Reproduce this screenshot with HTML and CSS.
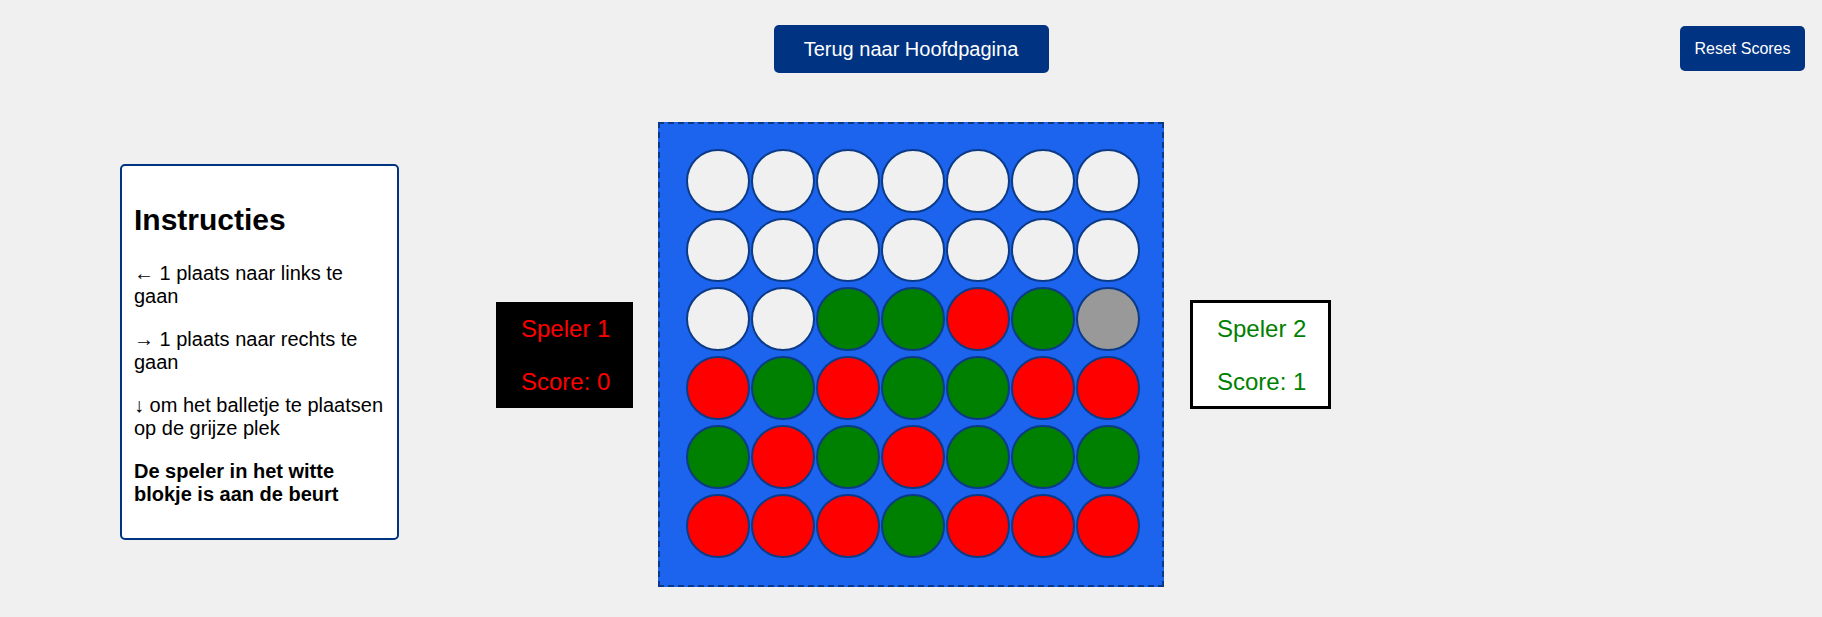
FILE: index.html
```html
<!DOCTYPE html>
<html lang="nl">
<head>
<meta charset="utf-8">
<title>Vier op een rij</title>
<link rel="stylesheet" href="styles.css">
</head>
<body>
  <header class="top-bar">
    <div class="top-spacer"></div>
    <button class="btn btn-home">Terug naar Hoofdpagina</button>
    <button class="btn btn-reset">Reset Scores</button>
  </header>

  <main class="game-row">
    <div class="left-side">
      <section class="instructions">
        <h2>Instructies</h2>
        <p>← 1 plaats naar links te gaan</p>
        <p>→ 1 plaats naar rechts te gaan</p>
        <p>↓ om het balletje te plaatsen op de grijze plek</p>
        <p class="bold">De speler in het witte blokje is aan de beurt</p>
      </section>
      <div class="player player-one">
        <p>Speler 1</p>
        <p>Score: 0</p>
      </div>
    </div>

    <div class="board">
      <div class="cell"></div><div class="cell"></div><div class="cell"></div><div class="cell"></div><div class="cell"></div><div class="cell"></div><div class="cell"></div>
      <div class="cell"></div><div class="cell"></div><div class="cell"></div><div class="cell"></div><div class="cell"></div><div class="cell"></div><div class="cell"></div>
      <div class="cell"></div><div class="cell"></div><div class="cell green"></div><div class="cell green"></div><div class="cell red"></div><div class="cell green"></div><div class="cell preview"></div>
      <div class="cell red"></div><div class="cell green"></div><div class="cell red"></div><div class="cell green"></div><div class="cell green"></div><div class="cell red"></div><div class="cell red"></div>
      <div class="cell green"></div><div class="cell red"></div><div class="cell green"></div><div class="cell red"></div><div class="cell green"></div><div class="cell green"></div><div class="cell green"></div>
      <div class="cell red"></div><div class="cell red"></div><div class="cell red"></div><div class="cell green"></div><div class="cell red"></div><div class="cell red"></div><div class="cell red"></div>
    </div>

    <div class="right-side">
      <div class="player player-two active">
        <p>Speler 2</p>
        <p>Score: 1</p>
      </div>
    </div>
  </main>
</body>
</html>
```

FILE: styles.css
```css
html, body {
  margin: 0;
  padding: 0;
}

body {
  background: #f0f0f0;
  font-family: "Liberation Sans", Arial, sans-serif;
  font-size: 20px;
  color: #000;
  width: 1822px;
}

.top-bar {
  display: grid;
  grid-template-columns: 1fr auto 1fr;
  align-items: start;
  padding-top: 25px;
}

.btn {
  background: #003382;
  color: #fff;
  border: none;
  border-radius: 5px;
  font-family: "Liberation Sans", Arial, sans-serif;
  cursor: pointer;
}

.btn-home {
  font-size: 20px;
  line-height: 23px;
  width: 275px;
  height: 48px;
  padding: 0;
}

.btn-reset {
  justify-self: end;
  margin-top: 1px;
  margin-right: 17px;
  font-size: 16px;
  line-height: 18px;
  width: 125px;
  height: 45px;
  padding: 0;
}

.game-row {
  display: grid;
  grid-template-columns: 1fr 506px 1fr;
  align-items: center;
  margin-top: 49px;
}

.left-side {
  display: flex;
  align-items: center;
  justify-content: space-between;
  padding-left: 120px;
  padding-right: 25px;
}

.right-side {
  display: flex;
  align-items: center;
  padding-left: 26px;
}

.instructions {
  width: 251px;
  padding: 12px;
  background: #fff;
  border: 2px solid #003382;
  border-radius: 5px;
  margin-top: -6px;
}

.instructions h2 {
  font-size: 30px;
  font-weight: bold;
  margin: 25px 0;
}

.instructions p {
  margin: 20px 0;
  line-height: 23px;
}

.instructions p.bold {
  font-weight: bold;
}

.player {
  width: 87px;
  padding: 13px 25px;
  font-size: 24px;
  text-align: center;
  white-space: nowrap;
}

.player p {
  margin: 0;
  line-height: 27px;
}

.player p + p {
  margin-top: 26px;
}

.player-one {
  background: #000;
  color: #ff0000;
}

.player-two {
  background: #fff;
  color: #008000;
}

.player.active {
  border: 3px solid #000;
  padding: 12px 24px 11px;
}

.board {
  background: #1c63ee;
  border: 2px dashed #0a3a86;
  padding: 25px 22px 27px 26px;
  display: grid;
  grid-template-columns: repeat(7, 64px);
  grid-auto-rows: 64px;
  column-gap: 1px;
  row-gap: 5px;
}

.cell {
  box-sizing: border-box;
  width: 64px;
  height: 64px;
  border-radius: 50%;
  border: 2px solid #0b3a86;
  background: #f0f0f0;
}

.cell.red {
  background: #ff0000;
}

.cell.green {
  background: #008000;
}

.cell.preview {
  background: #999999;
}
```
